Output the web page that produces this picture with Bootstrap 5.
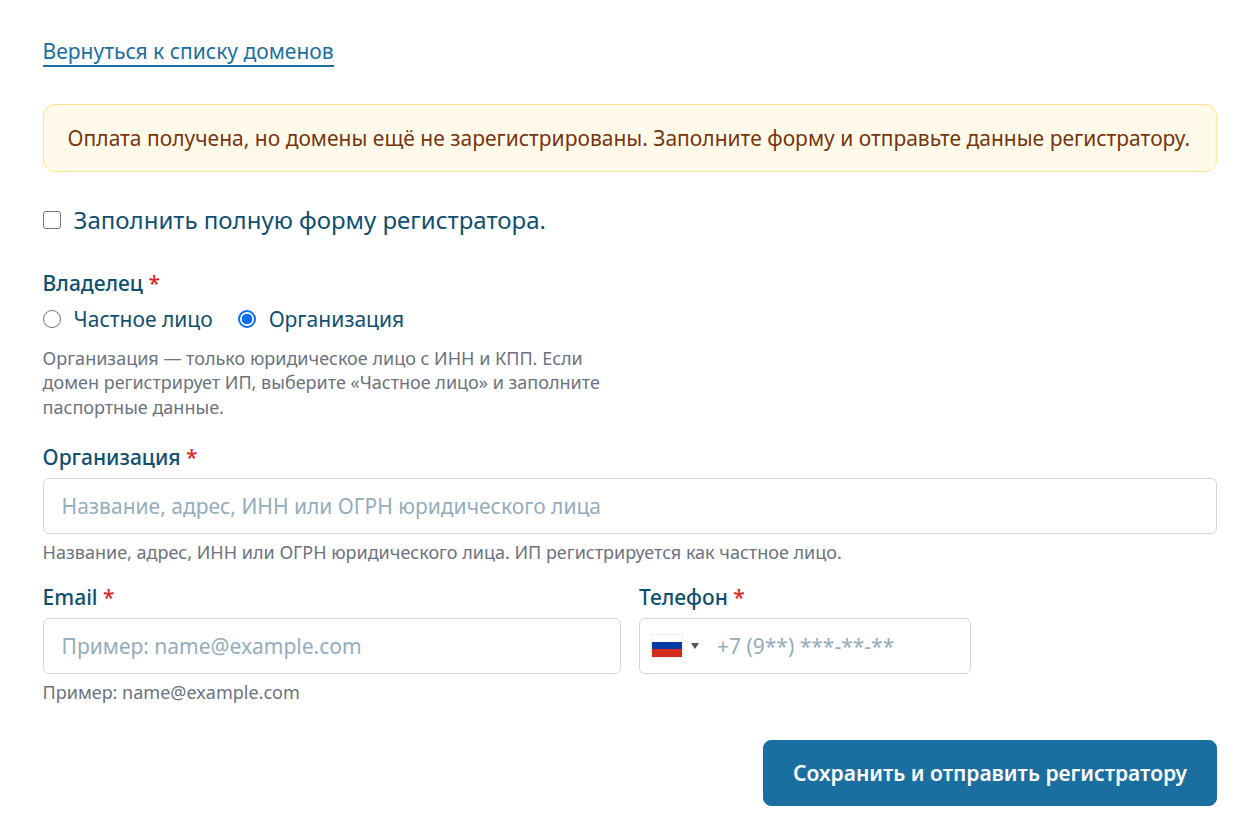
<!DOCTYPE html>
<html lang="ru">
<head>
<meta charset="utf-8">
<title>Форма регистратора</title>
<link href="https://cdn.jsdelivr.net/npm/bootstrap@5.3.0/dist/css/bootstrap.min.css" rel="stylesheet">
<style>
body { font-family: "Noto Sans", sans-serif; color: #0f4c6e; background: #fff; }
.page-wrap { padding: 37px 40px 0 42.6px; }
.back-link { display: inline-block; font-size: 21px; line-height: 28px; color: #1b6fa0; text-decoration: none; border-bottom: 2px solid #1b6fa0; }
.note-box { margin-top: 37px; background: #fffaea; border: 1px solid #fde48f; border-radius: 12px; padding: 18px 24px; font-size: 21px; line-height: 30px; color: #78350f; }
.full-check { margin-top: 31px; display: flex; align-items: center; gap: 13px; padding: 0; min-height: 0; margin-bottom: 0; }
.full-check .form-check-input, .owner-radios .form-check-input { float: none; margin: 0; width: 18px; height: 18px; border: 1.5px solid #767676; flex: none; }
.full-check .form-check-input { border-radius: 3px; }
.owner-radios .form-check-input:checked { background-color: #fff; border: 2px solid #0b6ff5; background-image: radial-gradient(circle, #0b6ff5 0 5px, transparent 5.6px); }
.full-check .form-check-label { font-size: 24px; line-height: 34px; color: #0f4f72; }
.field-label { font-size: 21px; line-height: 30px; font-weight: 500; color: #0f4f72; margin: 0; display: block; }
.req { color: #dc2626; }
.owner-block { margin-top: 31px; }
.owner-radios { margin-top: 6px; gap: 25px; }
.owner-radios .form-check { padding: 0; margin: 0; min-height: 0; display: flex; align-items: center; gap: 13px; }
.owner-radios .form-check-label { font-size: 21px; line-height: 30px; color: #0f4f72; }
.owner-hint { margin-top: 12px; max-width: 570px; font-size: 18px; line-height: 24.4px; color: #6b7280; }
.field-hint { font-size: 18px; line-height: 25px; color: #6b7280; margin-top: 6px; }
.org-block { margin-top: 23.1px; }
.org-block .field-label, .contact-col .field-label { margin-bottom: 6px; }
.big-input.form-control { height: 56px; font-size: 21px; border-color: #d1d5db; border-radius: 6px; padding: 0 18px; color: #0f4f72; }
.big-input.form-control::placeholder { color: #94adbd; opacity: 1; }
.contact-row { margin-top: 17px; gap: 18px; }
.mail-col { width: 578.4px; }
.phone-col { width: 332px; }
.phone-box { height: 56px; border: 1px solid #d1d5db; border-radius: 6px; padding-left: 11px; gap: 8px; }
.flag-svg { width: 32px; height: 24px; flex: none; }
.caret-mark { width: 0; height: 0; border-left: 4px solid transparent; border-right: 4px solid transparent; border-top: 6px solid #555; flex: none; }
.phone-input.form-control { border: 0; box-shadow: none; padding: 0 0 0 10px; font-size: 21px; background: transparent; height: 54px; }
.phone-input.form-control::placeholder { color: #94adbd; opacity: 1; }
.send-row { margin-top: 35px; }
.send-btn.btn { background: #1b6fa0; border-color: #1b6fa0; color: #fff; font-size: 21px; line-height: 30px; font-weight: 600; border-radius: 8px; padding: 17px 29px; }
</style>
</head>
<body>
<div class="page-wrap">
  <a class="back-link" href="#">Вернуться к списку доменов</a>
  <div class="note-box">Оплата получена, но домены ещё не зарегистрированы. Заполните форму и отправьте данные регистратору.</div>
  <div class="form-check full-check">
    <input class="form-check-input" type="checkbox" id="fullForm">
    <label class="form-check-label" for="fullForm">Заполнить полную форму регистратора.</label>
  </div>
  <div class="owner-block">
    <span class="field-label">Владелец <span class="req">*</span></span>
    <div class="d-flex owner-radios">
      <div class="form-check">
        <input class="form-check-input" type="radio" name="owner" id="ownerPerson">
        <label class="form-check-label" for="ownerPerson">Частное лицо</label>
      </div>
      <div class="form-check">
        <input class="form-check-input" type="radio" name="owner" id="ownerOrg" checked>
        <label class="form-check-label" for="ownerOrg">Организация</label>
      </div>
    </div>
    <div class="owner-hint">Организация — только юридическое лицо с ИНН и КПП. Если домен регистрирует ИП, выберите «Частное лицо» и заполните паспортные данные.</div>
  </div>
  <div class="org-block">
    <label class="field-label" for="orgName">Организация <span class="req">*</span></label>
    <input class="form-control big-input" id="orgName" type="text" placeholder="Название, адрес, ИНН или ОГРН юридического лица">
    <div class="field-hint">Название, адрес, ИНН или ОГРН юридического лица. ИП регистрируется как частное лицо.</div>
  </div>
  <div class="d-flex contact-row">
    <div class="contact-col mail-col">
      <label class="field-label" for="mail">Email <span class="req">*</span></label>
      <input class="form-control big-input" id="mail" type="text" placeholder="Пример: name@example.com">
      <div class="field-hint">Пример: name@example.com</div>
    </div>
    <div class="contact-col phone-col">
      <label class="field-label" for="phone">Телефон <span class="req">*</span></label>
      <div class="d-flex align-items-center phone-box">
        <svg class="flag-svg" viewBox="0 0 32 24" aria-hidden="true">
          <rect width="32" height="24" fill="#eee"/>
          <rect x="1" y="1" width="30" height="7" fill="#fff"/>
          <rect x="1" y="8" width="30" height="7" fill="#0a3aa6"/>
          <rect x="1" y="15" width="30" height="8" fill="#d52b1e"/>
        </svg>
        <span class="caret-mark"></span>
        <input class="form-control phone-input" id="phone" type="text" placeholder="+7 (9**) ***-**-**">
      </div>
    </div>
  </div>
  <div class="d-flex justify-content-end send-row">
    <button class="btn send-btn" type="button">Сохранить и отправить регистратору</button>
  </div>
</div>
<script src="https://cdn.jsdelivr.net/npm/bootstrap@5.3.0/dist/js/bootstrap.bundle.min.js"></script>
</body>
</html>
